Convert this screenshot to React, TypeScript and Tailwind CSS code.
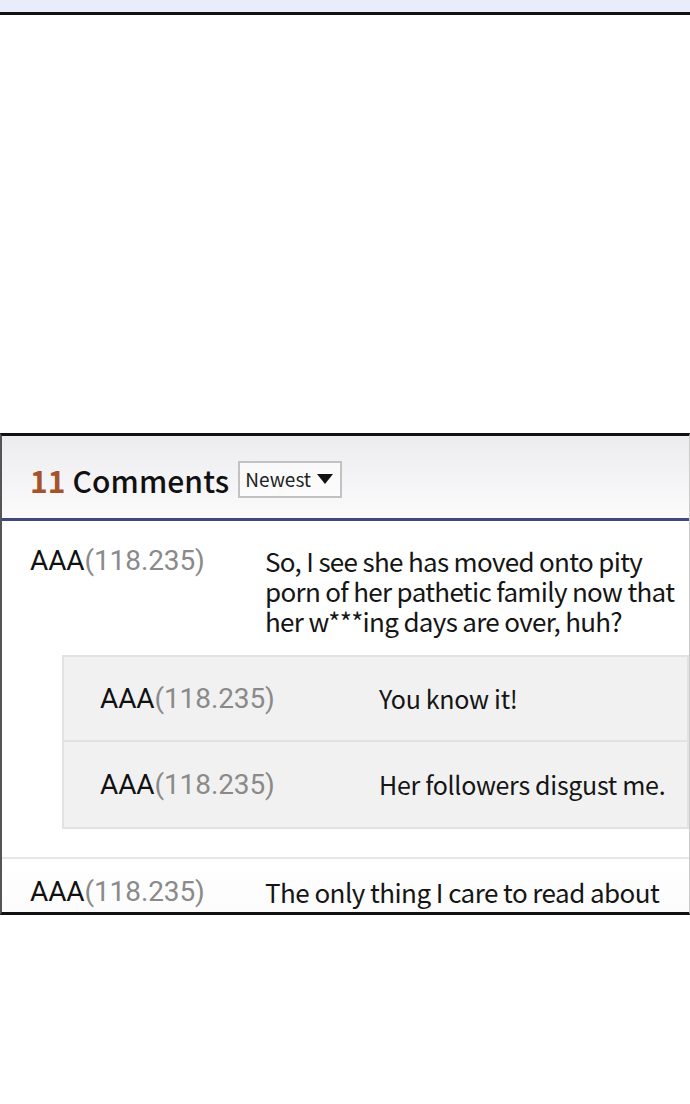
import React from 'react';

const nameFont = { fontFamily: 'Roboto, "Liberation Sans", sans-serif' };
const bodyFont = { fontFamily: '"Noto Sans CJK KR", "Noto Sans", sans-serif' };

function Author() {
  return (
    <span className="text-[28px] leading-[30px] tracking-[-0.1px] whitespace-nowrap" style={nameFont}>
      <span className="text-[#111]">AAA</span>
      <span className="text-[#8a8a8a]">(118.235)</span>
    </span>
  );
}

function ReplyRow({ text, last }: { text: string; last?: boolean }) {
  return (
    <div className={`h-[85px] flex items-center pl-[36px] ${last ? '' : 'border-b-2 border-[#e2e2e2]'}`}>
      <div className="w-[279px] shrink-0">
        <Author />
      </div>
      <p className="text-[25px] leading-[30px] tracking-[-0.3px] text-[#151515] -mt-[2px]" style={bodyFont}>
        {text}
      </p>
    </div>
  );
}

export default function App() {
  return (
    <div className="w-[690px] h-[1104px] bg-white flex flex-col overflow-hidden">
      <div className="h-[12px] bg-[#e9edfb] shrink-0" />
      <div className="h-[3px] bg-[#111] shrink-0" />
      <div className="h-[418px] shrink-0" />

      <section className="h-[482px] shrink-0 border-t-[3px] border-b-[3px] border-[#111] border-l-2 border-l-[#555] border-r border-r-[#ccc] overflow-hidden bg-white">
        <header className="h-[85px] bg-gradient-to-b from-[#ececef] to-[#fbfbfc] border-b-[3px] border-[#3d4a7b] flex items-center pl-[28px] gap-[9px]">
          <h2 className="text-[30px] font-medium leading-none pt-[6px] whitespace-nowrap tracking-[0.1px]" style={bodyFont}>
            <span className="text-[#a4532a] font-bold">11</span>{' '}
            <span className="text-[#111]">Comments</span>
          </h2>
          <div className="mt-[4px] h-[37px] w-[104px] shrink-0 border-2 border-[#c2c2c2] bg-white/60 flex items-center pl-[5px] gap-[6px]">
            <span className="text-[19px] text-[#222]" style={bodyFont}>Newest</span>
            <svg width="16" height="10" viewBox="0 0 16 10">
              <path d="M0 0 H16 L8 10 Z" fill="#111" />
            </svg>
          </div>
        </header>

        <div className="flex pl-[28px] pt-[25px]">
          <div className="w-[235px] shrink-0">
            <Author />
          </div>
          <p className="text-[26px] leading-[30px] tracking-[-0.68px] text-[#151515] pr-[4px]" style={bodyFont}>
            So, I see she has moved onto pity porn of her pathetic family now that her w***ing days are over, huh?
          </p>
        </div>

        <div className="ml-[60px] mt-[19px] border-2 border-[#e2e2e2] bg-[#f1f1f1]">
          <ReplyRow text="You know it!" />
          <ReplyRow text="Her followers disgust me." last />
        </div>

        <div className="mt-[28px] border-t-2 border-[#e6e6e6] bg-gradient-to-b from-white to-[#fafafa] flex pl-[28px] pt-[18px]">
          <div className="w-[235px] shrink-0">
            <Author />
          </div>
          <p className="text-[26px] leading-[30px] tracking-[-0.55px] text-[#151515] pr-[4px]" style={bodyFont}>
            The only thing I care to read about these kids is their rise and fall.
          </p>
        </div>
      </section>
    </div>
  );
}
